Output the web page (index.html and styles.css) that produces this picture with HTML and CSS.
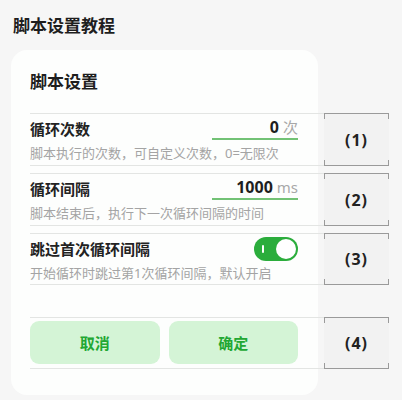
FILE: index.html
```html
<!DOCTYPE html>
<html lang="zh-CN">
<head>
<meta charset="utf-8">
<title>脚本设置教程</title>
<link rel="stylesheet" href="styles.css">
</head>
<body>
<h1 class="page-title">脚本设置教程</h1>
<div class="card">
  <h2 class="card-title">脚本设置</h2>

  <div class="section">
    <div class="section-main">
      <div class="row">
        <span class="label">循环次数</span>
        <span class="value-box"><span class="num">0</span><span class="unit">次</span></span>
      </div>
      <div class="desc">脚本执行的次数，可自定义次数，0=无限次</div>
    </div>
    <div class="bracket">(1)</div>
  </div>

  <div class="section">
    <div class="section-main">
      <div class="row">
        <span class="label">循环间隔</span>
        <span class="value-box"><span class="num">1000</span><span class="unit">ms</span></span>
      </div>
      <div class="desc">脚本结束后，执行下一次循环间隔的时间</div>
    </div>
    <div class="bracket">(2)</div>
  </div>

  <div class="section section-gap">
    <div class="section-main toggle-main">
      <div class="row">
        <span class="label">跳过首次循环间隔</span>
        <span class="toggle"><span class="toggle-mark"></span><span class="toggle-knob"></span></span>
      </div>
      <div class="desc desc-tight">开始循环时跳过第1次循环间隔，默认开启</div>
    </div>
    <div class="bracket">(3)</div>
  </div>

  <div class="section">
    <div class="section-main buttons-main">
      <div class="buttons">
        <button class="btn">取消</button>
        <button class="btn">确定</button>
      </div>
    </div>
    <div class="bracket">(4)</div>
  </div>
</div>
</body>
</html>
```

FILE: styles.css
```css
html, body {
  margin: 0;
  padding: 0;
}
body {
  width: 402px;
  height: 400px;
  overflow: hidden;
  background: #f6f6f6;
  font-family: "Noto Sans", "Noto Sans CJK SC", sans-serif;
  color: #222;
}
.page-title {
  margin: 0;
  padding: 14px 13px 0;
  font-size: 17px;
  line-height: 24px;
  font-weight: 700;
  color: #1e1e1e;
}
.card {
  margin: 12px 0 0 11px;
  width: 307px;
  height: 345px;
  box-sizing: border-box;
  padding: 20px 0 0 19px;
  border-radius: 16px;
  background: #fdfefd;
}
.card-title {
  margin: 0 0 19px;
  font-size: 17px;
  line-height: 24px;
  font-weight: 700;
  color: #1e1e1e;
}
.section {
  display: flex;
  width: 359px;
  margin-bottom: 7px;
}
.section-gap {
  margin-bottom: 32px;
}
.section-main {
  flex: 0 0 294px;
  box-sizing: border-box;
  padding: 3px 26px 3px 0;
  border-top: 1px solid #e3e5e3;
  border-bottom: 1px solid #e3e5e3;
}
.toggle-main {
  padding-bottom: 2px;
}
.buttons-main {
  padding-bottom: 4px;
}
.row {
  display: flex;
  justify-content: space-between;
  align-items: center;
}
.label {
  font-size: 15px;
  line-height: 20px;
  font-weight: 700;
  color: #222;
}
.value-box {
  width: 86px;
  text-align: right;
  line-height: 20px;
  padding-bottom: 1px;
  border-bottom: 2px solid #72c275;
}
.num {
  font-size: 16px;
  font-weight: 700;
  color: #1e1e1e;
}
.unit {
  margin-left: 4px;
  font-size: 15px;
  color: #a8a8a8;
}
.desc {
  margin-top: 4px;
  font-size: 13px;
  line-height: 18px;
  color: #a4a4a4;
}
.desc-tight {
  margin-top: 3px;
}
.toggle {
  position: relative;
  width: 44px;
  height: 24px;
  border-radius: 12px;
  background: #2bad3c;
  display: flex;
  align-items: center;
  justify-content: space-between;
  box-sizing: border-box;
  padding: 0 2px 0 8px;
}
.toggle-mark {
  width: 2px;
  height: 8px;
  border-radius: 1px;
  background: #fff;
}
.toggle-knob {
  width: 20px;
  height: 20px;
  border-radius: 50%;
  background: #fff;
}
.buttons {
  display: flex;
  gap: 9px;
}
.btn {
  flex: 1;
  height: 43px;
  border: none;
  border-radius: 9px;
  background: #d4f4d6;
  color: #22a733;
  font-family: "Noto Sans", "Noto Sans CJK SC", sans-serif;
  font-size: 15px;
  font-weight: 700;
  padding: 0;
}
.bracket {
  position: relative;
  flex: 0 0 65px;
  display: flex;
  align-items: center;
  justify-content: center;
  border-top: 1px solid #9a9a9a;
  border-bottom: 1px solid #9a9a9a;
  background: #f2f2f2;
  font-size: 16px;
  font-weight: 700;
  letter-spacing: 1px;
  color: #222;
}
.bracket::before,
.bracket::after {
  content: "";
  position: absolute;
  left: 0;
  right: 0;
  height: 5px;
  border-left: 1px solid #9a9a9a;
  border-right: 1px solid #9a9a9a;
}
.bracket::before {
  top: 0;
}
.bracket::after {
  bottom: 0;
}
```
